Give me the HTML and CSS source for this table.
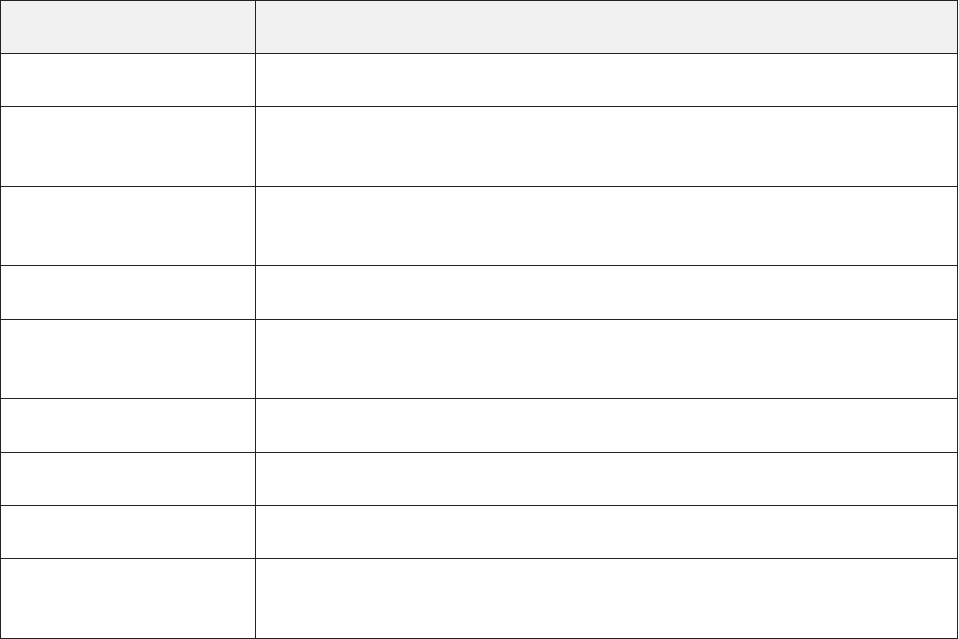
FILE: index.html
```html
<!DOCTYPE html>
<html lang="en">
<head>
<meta charset="utf-8">
<title>Table</title>
<link rel="stylesheet" href="styles.css">
</head>
<body>
<div class="table" role="table">
  <div class="row head h53" role="row"><div class="cell c1" role="columnheader"></div><div class="cell c2" role="columnheader"></div></div>
  <div class="row h53" role="row"><div class="cell c1" role="cell"></div><div class="cell c2" role="cell"></div></div>
  <div class="row h80" role="row"><div class="cell c1" role="cell"></div><div class="cell c2" role="cell"></div></div>
  <div class="row h79" role="row"><div class="cell c1" role="cell"></div><div class="cell c2" role="cell"></div></div>
  <div class="row h54" role="row"><div class="cell c1" role="cell"></div><div class="cell c2" role="cell"></div></div>
  <div class="row h79" role="row"><div class="cell c1" role="cell"></div><div class="cell c2" role="cell"></div></div>
  <div class="row h54" role="row"><div class="cell c1" role="cell"></div><div class="cell c2" role="cell"></div></div>
  <div class="row h53" role="row"><div class="cell c1" role="cell"></div><div class="cell c2" role="cell"></div></div>
  <div class="row h53" role="row"><div class="cell c1" role="cell"></div><div class="cell c2" role="cell"></div></div>
  <div class="row h80" role="row"><div class="cell c1" role="cell"></div><div class="cell c2" role="cell"></div></div>
</div>
</body>
</html>
```
FILE: styles.css
```css
html, body {
  margin: 0;
  padding: 0;
  background: #ffffff;
  font-family: "Liberation Sans", Arial, sans-serif;
}
.table {
  width: 958px;
  box-sizing: border-box;
  border-top: 1px solid #222222;
  border-left: 1px solid #222222;
  border-right: 1px solid #222222;
  display: flex;
  flex-direction: column;
}
.row {
  display: flex;
  box-sizing: border-box;
  border-bottom: 1px solid #222222;
}
.head {
  background: #f1f1f1;
}
.h53 { height: 53px; }
.h54 { height: 54px; }
.h79 { height: 79px; }
.h80 { height: 80px; }
.cell {
  box-sizing: border-box;
}
.c1 {
  width: 255px;
  flex: none;
  border-right: 1px solid #222222;
}
.c2 {
  flex: 1;
}
```
